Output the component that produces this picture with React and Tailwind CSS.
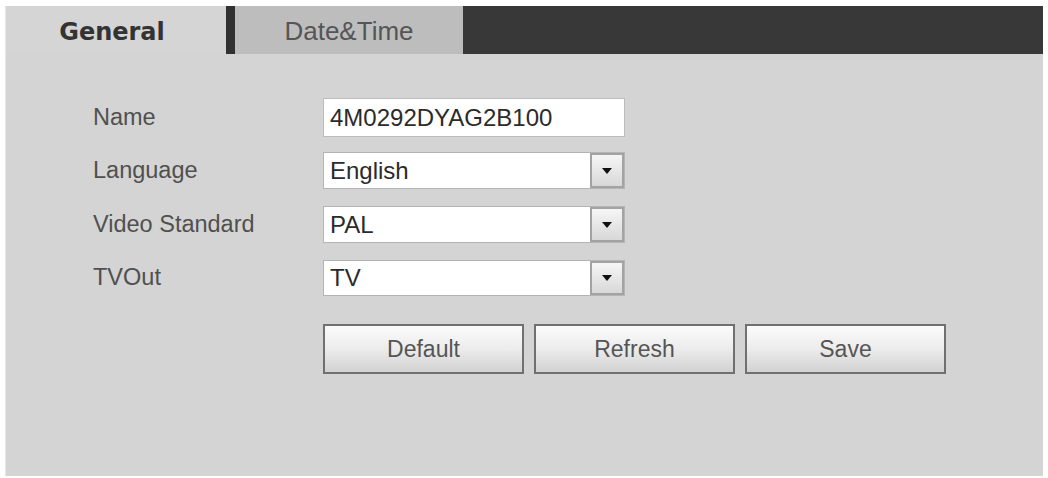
import { useState } from "react";

const labelCls =
  "w-[230px] shrink-0 text-[23.5px] leading-none text-[#505050] font-['Liberation_Sans',Arial,sans-serif]";

function SelectBox({ value }) {
  return (
    <div className="flex h-full w-[302px] border border-[#b4b4b4] bg-white">
      <div className="flex flex-1 items-center pl-[6px] text-[24px] leading-none text-[#2b2b2b] font-['Liberation_Sans',Arial,sans-serif]">
        {value}
      </div>
      <div className="flex w-[34px] items-center justify-center border-2 border-[#a3a3a3] bg-gradient-to-b from-[#f6f6f6] to-[#d8d8d8]">
        <div className="h-0 w-0 border-x-[5px] border-t-[6px] border-x-transparent border-t-[#111]" />
      </div>
    </div>
  );
}

function ActionButton({ children }) {
  return (
    <button className="h-[50px] w-[201px] border-2 border-[#707070] bg-gradient-to-b from-[#fbfbfb] via-[#ececec] to-[#d2d2d2] text-[23px] leading-none text-[#555] font-['Liberation_Sans',Arial,sans-serif]">
      {children}
    </button>
  );
}

export default function App() {
  const [tab, setTab] = useState("general");
  const [name, setName] = useState("4M0292DYAG2B100");

  return (
    <div className="h-[478px] w-[1048px] bg-white pl-[5px] pt-[6px]">
      <div className="h-[470px] w-[1038px] border-l border-[#e6e6e6] bg-[#d4d4d4]">
        {/* tab strip */}
        <div className="flex h-[48px]">
          <div
            className="flex w-[220px] cursor-pointer items-center justify-center bg-[#d5d5d5] pr-[8px] pt-[3px] text-[24px] font-bold text-[#333] font-['DejaVu_Sans',Verdana,sans-serif]"
            onClick={() => setTab("general")}
          >
            General
          </div>
          <div className="w-[9px] bg-[#313131]" />
          <div
            className="flex w-[228px] cursor-pointer items-center justify-center bg-[#bdbdbd] pt-[2px] text-[26px] text-[#555] font-['Liberation_Sans',Arial,sans-serif]"
            onClick={() => setTab("datetime")}
          >
            Date&amp;Time
          </div>
          <div className="flex-1 bg-[#383838]" />
        </div>

        {/* form */}
        {tab === "general" && (
          <div className="flex flex-col pl-[87px] pt-[44px]">
            <div className="flex h-[39px] items-center">
              <span className={labelCls}>Name</span>
              <input
                className="h-full w-[302px] border border-[#bcbcbc] bg-white pl-[6px] text-[24px] text-[#2b2b2b] outline-none font-['Liberation_Sans',Arial,sans-serif]"
                value={name}
                onChange={(e) => setName(e.target.value)}
              />
            </div>
            <div className="mt-[15px] flex h-[37px] items-center">
              <span className={labelCls}>Language</span>
              <SelectBox value="English" />
            </div>
            <div className="mt-[17px] flex h-[37px] items-center">
              <span className={labelCls}>Video Standard</span>
              <SelectBox value="PAL" />
            </div>
            <div className="mt-[17px] flex h-[36px] items-center">
              <span className={labelCls}>TVOut</span>
              <SelectBox value="TV" />
            </div>
            <div className="mt-[28px] flex gap-[10px] pl-[230px]">
              <ActionButton>Default</ActionButton>
              <ActionButton>Refresh</ActionButton>
              <ActionButton>Save</ActionButton>
            </div>
          </div>
        )}
      </div>
    </div>
  );
}
